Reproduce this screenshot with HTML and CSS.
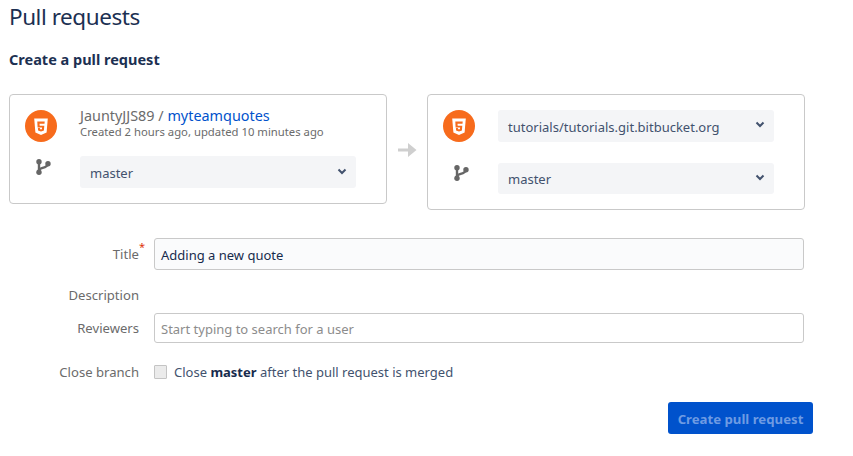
FILE: index.html
```html
<!DOCTYPE html>
<html lang="en">
<head>
<meta charset="utf-8">
<title>Pull requests</title>
<link rel="stylesheet" href="styles.css">
</head>
<body>
<main class="page">
  <h1 class="title">Pull requests</h1>
  <h2 class="subtitle">Create a pull request</h2>
  <section class="cards">
    <div class="card card-source">
      <div class="icon-col">
        <svg class="avatar" viewBox="0 0 32 32"><circle cx="16" cy="16" r="16" fill="#f76b1c"/><path d="M9.200 8.500h13.600l-1.200 14L16 25l-5.600-2.500z" fill="#fff"/><path d="M12.300 11.500h7.400l-.2 2.200h-5l.2 2h4.600l-.4 4.800-2.900 1-2.900-1-.2-2.400h2l.1 1 1 .4 1-.4.1-1.700h-4.500z" fill="#f76b1c"/></svg>
        <svg class="branch" viewBox="0 0 15 16"><g fill="none" stroke="#666" stroke-width="2.400"><path d="M3 3v10"/><path d="M3 11.500c0-3 8-2 9-6.500"/></g><circle cx="3" cy="2.800" r="2.700" fill="#666"/><circle cx="3" cy="13.200" r="2.700" fill="#666"/><circle cx="12" cy="4.800" r="2.700" fill="#666"/></svg>
      </div>
      <div class="main-col">
        <div class="repo-line">JauntyJJS89 / <a class="repo-link">myteamquotes</a></div>
        <div class="meta">Created 2 hours ago, updated 10 minutes ago</div>
        <div class="select select-source-branch"><span class="select-text">master</span><svg class="chev" viewBox="0 0 10 7"><path d="M1.500 1.500 5 5l3.500-3.500" fill="none" stroke="#42526e" stroke-width="2"/></svg></div>
      </div>
    </div>
    <div class="arrow-col">
      <svg class="arrow" viewBox="0 0 19 14"><path d="M0 5.500h10V0l8.500 7-8.500 7V8.500H0z" fill="#cfcfcf"/></svg>
    </div>
    <div class="card card-dest">
      <div class="icon-col">
        <svg class="avatar" viewBox="0 0 32 32"><circle cx="16" cy="16" r="16" fill="#f76b1c"/><path d="M9.200 8.500h13.600l-1.200 14L16 25l-5.600-2.500z" fill="#fff"/><path d="M12.300 11.500h7.400l-.2 2.200h-5l.2 2h4.600l-.4 4.800-2.900 1-2.900-1-.2-2.400h2l.1 1 1 .4 1-.4.1-1.700h-4.500z" fill="#f76b1c"/></svg>
        <svg class="branch" viewBox="0 0 15 16"><g fill="none" stroke="#666" stroke-width="2.400"><path d="M3 3v10"/><path d="M3 11.500c0-3 8-2 9-6.500"/></g><circle cx="3" cy="2.800" r="2.700" fill="#666"/><circle cx="3" cy="13.200" r="2.700" fill="#666"/><circle cx="12" cy="4.800" r="2.700" fill="#666"/></svg>
      </div>
      <div class="main-col selects">
        <div class="select"><span class="select-text">tutorials/tutorials.git.bitbucket.org</span><svg class="chev" viewBox="0 0 10 7"><path d="M1.500 1.500 5 5l3.500-3.500" fill="none" stroke="#42526e" stroke-width="2"/></svg></div>
        <div class="select"><span class="select-text">master</span><svg class="chev" viewBox="0 0 10 7"><path d="M1.500 1.500 5 5l3.500-3.500" fill="none" stroke="#42526e" stroke-width="2"/></svg></div>
      </div>
    </div>
  </section>
  <form class="form">
    <div class="row row-title">
      <div class="label">Title<sup class="req">*</sup></div>
      <div class="field field-value"><span class="field-text">Adding a new quote</span></div>
    </div>
    <div class="row row-desc">
      <div class="label">Description</div>
    </div>
    <div class="row row-reviewers">
      <div class="label">Reviewers</div>
      <div class="field field-placeholder"><span class="field-text">Start typing to search for a user</span></div>
    </div>
    <div class="row row-close">
      <div class="label">Close branch</div>
      <div class="check-wrap"><span class="checkbox"></span><span>Close <b class="strong">master</b> after the pull request is merged</span></div>
    </div>
    <div class="actions"><div class="button"><span class="button-text">Create pull request</span></div></div>
  </form>
</main>
</body>
</html>
```
FILE: styles.css
```css
* { box-sizing: border-box; }
html, body { margin: 0; background: #fff; }
body {
  font-family: "Noto Sans", "Open Sans", sans-serif;
  font-size: 13px;
  color: #172b4d;
  overflow: hidden;
}
.page { width: 853px; height: 456px; padding: 0 0 0 9px; }
.title {
  margin: 0;
  height: 50px;
  padding-top: 1px;
  font-size: 22.500px;
  line-height: 32px;
  font-weight: 400;
  letter-spacing: -0.45px;
  color: #1c3052;
}
.subtitle {
  margin: 0;
  height: 44px;
  font-size: 14.500px;
  line-height: 18px;
  font-weight: 700;
  color: #1c3052;
}
.cards { display: flex; align-items: flex-start; }
.card {
  display: flex;
  width: 378px;
  border: 1px solid #c9c9c9;
  border-radius: 4px;
  padding: 15px 30px 15px 15px;
}
.card-source { height: 110px; }
.card-dest { height: 116px; }
.icon-col {
  width: 55px;
  flex: none;
  display: flex;
  flex-direction: column;
}
.avatar { width: 32px; height: 32px; display: block; }
.branch { width: 15px; height: 16px; margin: 17px 0 0 11px; display: block; }
.card-dest .branch { margin-top: 23px; }
.main-col { flex: 1; min-width: 0; }
.selects { display: flex; flex-direction: column; gap: 21px; }
.repo-line { font-size: 14.400px; line-height: 19px; margin-top: -4px; color: #6b6b6b; }
.repo-link { color: #0052cc; }
.meta { font-size: 11.300px; line-height: 15px; color: #6b6b6b; margin-top: -1px; }
.select {
  height: 32px;
  background: #f4f5f7;
  border-radius: 3px;
  display: flex;
  align-items: center;
  justify-content: space-between;
  padding: 0 9px 0 10px;
  font-size: 13px;
  color: #42526e;
}
.select-text { position: relative; top: 1px; }
.select-source-branch { margin-top: 17px; }
.chev { width: 10px; height: 7px; display: block; margin-top: -2px; }
.arrow-col {
  width: 40px;
  flex: none;
  display: flex;
  justify-content: center;
  padding-top: 49px;
}
.arrow { width: 19px; height: 14px; display: block; }
.form { padding-top: 28px; }
.row { display: flex; align-items: center; }
.label {
  width: 130px;
  flex: none;
  text-align: right;
  font-size: 13.100px;
  color: #6b6b6b;
  margin-right: 15px;
}
.req { color: #de350b; font-size: 11px; line-height: 0; vertical-align: 8px; margin-right: -6px; }
.field {
  width: 650px;
  border: 1px solid #c9c9c9;
  border-radius: 3px;
  padding: 0 6px;
  display: flex;
  align-items: center;
  font-size: 13px;
}
.field-text { position: relative; top: 1px; }
.row-title .field { height: 32px; }
.field-value { background: #fafbfc; color: #172b4d; }
.row-desc { height: 20px; margin-top: 15px; }
.row-reviewers { margin-top: 8px; }
.field-placeholder { height: 30px; color: #8c8c8c; background: #fff; }
.row-close { margin-top: 19px; height: 20px; }
.check-wrap { display: flex; align-items: center; gap: 7px; color: #42526e; }
.checkbox {
  width: 13px;
  height: 14px;
  background: #ebebeb;
  border: 1px solid #c4c4c4;
  border-radius: 1px;
  flex: none;
}
.strong { color: #172b4d; font-weight: 700; }
.actions { display: flex; justify-content: flex-start; margin: 20px 0 0 659px; }
.button {
  width: 145px;
  height: 32px;
  background: #0052cc;
  border-radius: 3px;
  color: #6e9be3;
  font-weight: 700;
  font-size: 13.200px;
  display: flex;
  align-items: center;
  justify-content: center;
}
.button-text { position: relative; top: 1px; }
```
